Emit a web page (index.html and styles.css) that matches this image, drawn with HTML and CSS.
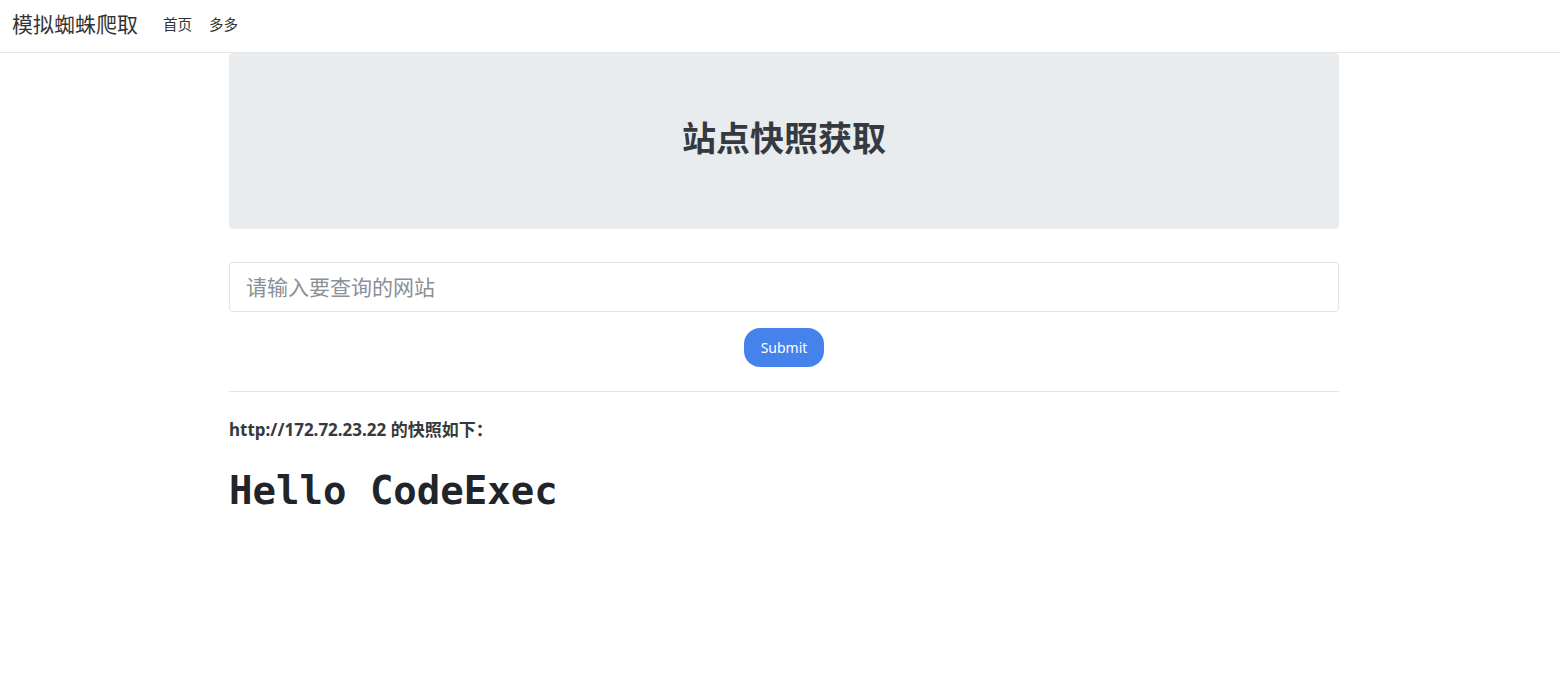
FILE: index.html
```html
<!DOCTYPE html>
<html lang="zh">
<head>
<meta charset="utf-8">
<title>模拟蜘蛛爬取</title>
<link rel="stylesheet" href="styles.css">
</head>
<body>
<nav class="navbar">
  <a class="brand" href="#">模拟蜘蛛爬取</a>
  <ul class="nav">
    <li><a href="#">首页</a></li>
    <li><a href="#">多多</a></li>
  </ul>
</nav>
<div class="page">
<main class="container">
  <div class="jumbotron">
    <h2 class="title">站点快照获取</h2>
  </div>
  <form class="form">
    <input class="input" type="text" placeholder="请输入要查询的网站">
    <div class="actions"><button class="btn" type="button">Submit</button></div>
  </form>
  <hr class="divider">
  <p class="result-label">http://172.72.23.22 的快照如下：</p>
  <div class="snapshot"><h1 class="hello">Hello CodeExec</h1></div>
</main>
</div>
</body>
</html>
```
FILE: styles.css
```css
* { box-sizing: border-box; }
html, body { margin: 0; padding: 0; }
body {
  font-family: "Noto Sans", "Noto Sans CJK SC", sans-serif;
  font-size: 16px;
  color: #212529;
  background: #fff;
}
a { text-decoration: none; }
.navbar {
  height: 53px;
  border-bottom: 1px solid #e5e5e5;
  display: flex;
  align-items: center;
  padding: 0 12px 4px;
}
.brand {
  font-size: 21px;
  color: #333;
  margin-right: 25px;
  line-height: 1;
}
.nav {
  list-style: none;
  margin: 0;
  padding: 0;
  display: flex;
  gap: 17px;
}
.nav a {
  font-size: 14.5px;
  color: #333;
}
.page { padding-left: 8px; }
.container {
  width: 1110px;
  margin: 0 auto;
}
.jumbotron {
  background: #e9ecef;
  border-radius: 4px;
  height: 176px;
  display: flex;
  align-items: center;
  justify-content: center;
  padding-bottom: 6px;
}
.title {
  margin: 0;
  font-size: 34px;
  font-weight: 700;
  color: #343a40;
  line-height: 1.2;
}
.form { margin-top: 33px; }
.input {
  display: block;
  width: 100%;
  height: 50px;
  padding: 0 16px;
  font-size: 21px;
  font-family: inherit;
  color: #495057;
  border: 1px solid #dee2e6;
  border-radius: 4px;
  outline: none;
}
.input::placeholder { color: #8a9096; }
.actions {
  display: flex;
  justify-content: center;
  margin-top: 16px;
}
.btn {
  width: 80px;
  height: 39px;
  border: 0;
  border-radius: 16px;
  background: #4582ec;
  color: #fff;
  font-family: inherit;
  font-size: 14px;
}
.divider {
  margin: 24px 0 0;
  border: 0;
  border-top: 1px solid #e5e5e5;
}
.result-label {
  margin: 24px 0 0;
  font-weight: 700;
  font-size: 17px;
  color: #343a40;
}
.hello {
  margin: 27px 0 0;
  font-family: "DejaVu Sans Mono", monospace;
  font-size: 39px;
  font-weight: 700;
  color: #212529;
  line-height: 1.2;
}
```
